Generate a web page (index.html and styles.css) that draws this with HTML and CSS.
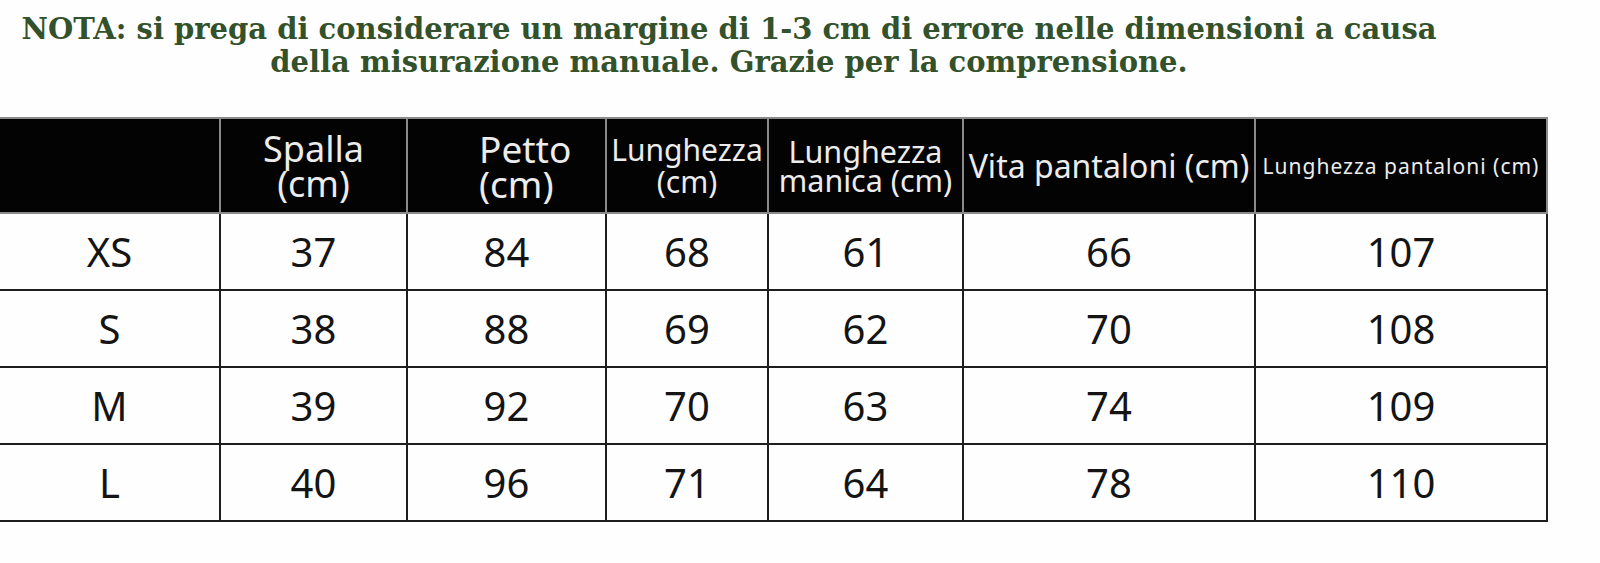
FILE: index.html
```html
<!DOCTYPE html>
<html lang="it">
<head>
<meta charset="utf-8">
<title>Tabella taglie</title>
<link rel="stylesheet" href="styles.css">
</head>
<body>
<div class="page">
  <p class="note">NOTA: si prega di considerare un margine di 1-3 cm di errore nelle dimensioni a causa<br>della misurazione manuale. Grazie per la comprensione.</p>
  <table class="sizes">
    <colgroup>
      <col class="c-size">
      <col class="c-spalla">
      <col class="c-petto">
      <col class="c-lung">
      <col class="c-manica">
      <col class="c-vita">
      <col class="c-pant">
    </colgroup>
    <thead>
      <tr>
        <th></th>
        <th class="h-big">Spalla<br>(cm)</th>
        <th class="h-big h-petto">Petto<br>(cm)</th>
        <th class="h-mid">Lunghezza<br>(cm)</th>
        <th class="h-mid h-manica">Lunghezza<br>manica (cm)</th>
        <th class="h-vita">Vita pantaloni (cm)</th>
        <th class="h-small">Lunghezza pantaloni (cm)</th>
      </tr>
    </thead>
    <tbody>
      <tr><td>XS</td><td>37</td><td>84</td><td>68</td><td>61</td><td>66</td><td>107</td></tr>
      <tr><td>S</td><td>38</td><td>88</td><td>69</td><td>62</td><td>70</td><td>108</td></tr>
      <tr><td>M</td><td>39</td><td>92</td><td>70</td><td>63</td><td>74</td><td>109</td></tr>
      <tr><td>L</td><td>40</td><td>96</td><td>71</td><td>64</td><td>78</td><td>110</td></tr>
    </tbody>
  </table>
</div>
</body>
</html>
```
FILE: styles.css
```css
html, body {
  margin: 0;
  padding: 0;
  background: #fefefe;
}

.page {
  width: 1600px;
  height: 563px;
  overflow: hidden;
}

.note {
  margin: 0;
  width: 1458px;
  padding-top: 13px;
  text-align: center;
  font-family: "DejaVu Serif", "Liberation Serif", serif;
  font-weight: bold;
  font-size: 29px;
  line-height: 33px;
  color: #33512a;
}

.sizes {
  margin-top: 38px;
  border-collapse: separate;
  border-spacing: 0;
  table-layout: fixed;
  width: 1548px;
}

.c-size { width: 221px; }
.c-spalla { width: 187px; }
.c-petto { width: 199px; }
.c-lung { width: 162px; }
.c-manica { width: 195px; }
.c-vita { width: 292px; }
.c-pant { width: 292px; }

.sizes th {
  height: 97px;
  box-sizing: border-box;
  padding: 0;
  background: #030303;
  color: #ececec;
  font-family: "Noto Sans", "Open Sans", sans-serif;
  font-weight: normal;
  text-align: center;
  vertical-align: middle;
  border-top: 2px solid #8a8a8a;
  border-right: 2px solid #8a8a8a;
  border-bottom: 2px solid #8a8a8a;
  white-space: nowrap;
}

.h-big {
  font-size: 36px;
  line-height: 35px;
  padding-bottom: 2px;
}

.sizes th.h-petto {
  text-align: left;
  padding-left: 71px;
  font-size: 37px;
}

.h-mid {
  font-size: 30px;
  line-height: 32px;
  padding-bottom: 4px;
}

.sizes th.h-manica {
  line-height: 29px;
  font-size: 30.5px;
}

.h-vita {
  font-size: 32px;
  line-height: 36px;
  padding-bottom: 4px;
}

.h-small {
  font-size: 21px;
  letter-spacing: 1px;
  line-height: 26px;
  padding-bottom: 6px;
}

.sizes td {
  height: 77px;
  box-sizing: border-box;
  padding: 0;
  text-align: center;
  vertical-align: middle;
  font-family: "Noto Sans", "Open Sans", sans-serif;
  font-size: 40px;
  line-height: 40px;
  color: #141414;
  background: #fefefe;
  border-right: 2px solid #1e1e1e;
  border-bottom: 2px solid #1e1e1e;
}
```
